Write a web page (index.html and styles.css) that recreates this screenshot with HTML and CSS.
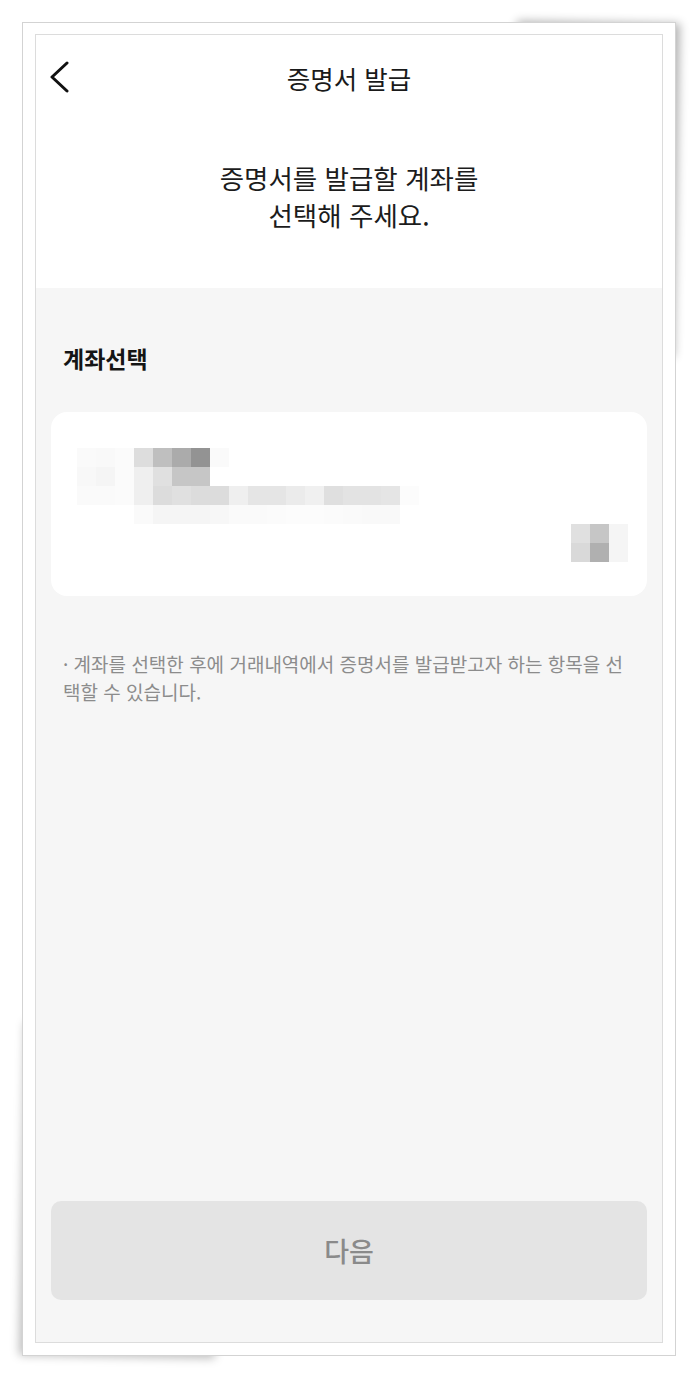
FILE: index.html
```html
<!DOCTYPE html>
<html lang="ko">
  <head>
    <meta charset="UTF-8" />
    <meta name="viewport" content="width=device-width, initial-scale=1.0" />
    <title>증명서 발급</title>
    <link rel="stylesheet" href="styles.css">
  </head>
  <body>
    <div class="frame">
      <div class="screen">
        <header class="topbar">
          <button class="back" aria-label="뒤로">
            <svg width="19" height="32" viewBox="0 0 19 32">
              <polyline points="17,2 2,16 17,30" fill="none" stroke="#111" stroke-width="3" stroke-linecap="round" stroke-linejoin="round" />
            </svg>
          </button>
          <h1>증명서 발급</h1>
          <span class="spacer"></span>
        </header>

        <p class="intro">증명서를 발급할 계좌를<br>선택해 주세요.</p>

        <main class="content">
          <h2>계좌선택</h2>
          <div class="account-card">
            <div class="mosaic" id="mosaic"></div>
          </div>
          <p class="note">· 계좌를 선택한 후에 거래내역에서 증명서를 발급받고자 하는 항목을 선택할 수 있습니다.</p>
          <button class="next">다음</button>
        </main>
      </div>
    </div>

    <script>
      // 계좌번호 가림 처리 (모자이크)
      const rows = [
        ["fa", "f9", "fb", "dd", "bf", "ab", "93", "fa"],
        ["f8", "f5", "fb", "ef", "e0", "c6", "c6"],
        ["fa", "fa", "fb", "ef", "dc", "e0", "dc", "dc", "ef", "e5", "e5", "eb", "f0", "df", "e3", "e3", "e5", "fc"],
        ["", "", "", "fa", "f5", "f5", "f5", "f7", "fa", "fa", "fb", "fc", "fc", "fb", "fa", "f9", "f9"],
        [],
        [],
      ];
      rows[4][26] = "e0"; rows[4][27] = "c6"; rows[4][28] = "f5";
      rows[5][26] = "d9"; rows[5][27] = "b0"; rows[5][28] = "f5";

      const mosaic = document.getElementById("mosaic");
      rows.forEach((row) => {
        for (let c = 0; c < 29; c++) {
          const cell = document.createElement("span");
          const v = row[c];
          if (v) cell.style.background = "#" + v + v + v;
          mosaic.appendChild(cell);
        }
      });
    </script>
  </body>
</html>
```

FILE: styles.css
```css
body {
  margin: 0;
  padding: 22px;
  background: #fff;
  font-family: "Noto Sans CJK KR", "Noto Sans", sans-serif;
  color: #1c1c1c;
}
.frame {
  position: relative;
  border: 1px solid #d3d3d3;
  background: #fff;
  padding: 11px 12px 12px;
}
.frame::before,
.frame::after {
  content: "";
  position: absolute;
  z-index: -1;
}
.frame::before {
  top: 6px;
  right: 6px;
  width: 25%;
  height: 25%;
  box-shadow: 8px -7px 10px rgba(0, 0, 0, 0.3);
  transform: rotate(1deg);
}
.frame::after {
  bottom: 6px;
  left: 6px;
  width: 30%;
  height: 25%;
  box-shadow: -7px 8px 10px rgba(0, 0, 0, 0.26);
  transform: rotate(1deg);
}
.screen {
  box-sizing: border-box;
  height: 1309px;
  border: 1px solid #dcdcdc;
  display: flex;
  flex-direction: column;
  background: #fff;
}
.topbar {
  height: 84px;
  display: flex;
  align-items: center;
}
.back,
.spacer {
  width: 60px;
  flex: none;
}
.back {
  border: none;
  background: none;
  padding: 0 0 0 14px;
  height: 32px;
  display: flex;
  align-items: center;
}
.topbar h1 {
  flex: 1;
  margin: 0;
  text-align: center;
  font-size: 25.5px;
  font-weight: 400;
  color: #1a1a1a;
}
.intro {
  margin: 0;
  padding: 40px 0 55px;
  text-align: center;
  font-size: 26.5px;
  line-height: 37px;
  color: #1c1c1c;
}
.content {
  flex: 1;
  display: flex;
  flex-direction: column;
  background: #f6f6f6;
  padding: 55px 15px 42px;
}
.content h2 {
  margin: 0 0 39px;
  padding-left: 12px;
  font-size: 23px;
  line-height: 30px;
  font-weight: 700;
  color: #151515;
}
.account-card {
  box-sizing: border-box;
  height: 184px;
  background: #fff;
  border-radius: 16px;
  padding: 36px 0 0 26px;
}
.mosaic {
  display: grid;
  grid-template-columns: repeat(29, 19px);
  grid-auto-rows: 19px;
}
.note {
  margin: 54px 0 0;
  padding: 0 20px 0 12px;
  font-size: 19px;
  line-height: 28px;
  color: #8c8c8c;
}
.next {
  margin-top: auto;
  height: 99px;
  border: none;
  border-radius: 10px;
  background: #e4e4e4;
  color: #8a8a8a;
  font-family: inherit;
  font-size: 27px;
  font-weight: 500;
}
```
